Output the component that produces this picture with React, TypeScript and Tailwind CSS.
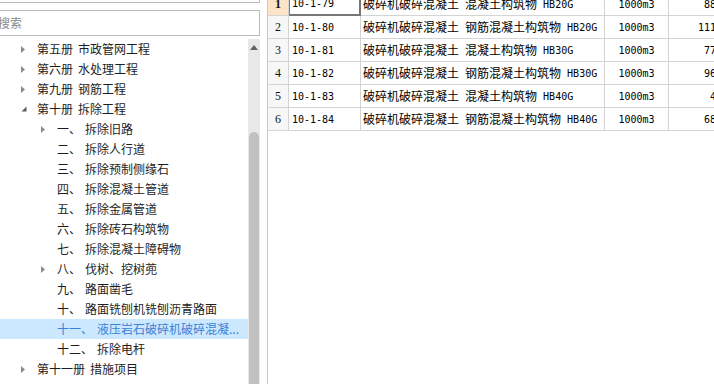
import React from "react";

type TreeNode = {
  level: 0 | 1;
  arrow?: "right" | "down";
  head: string;
  label: string;
  selected?: boolean;
};

const tree: TreeNode[] = [
  { level: 0, arrow: "right", head: "第五册", label: "市政管网工程" },
  { level: 0, arrow: "right", head: "第六册", label: "水处理工程" },
  { level: 0, arrow: "right", head: "第九册", label: "钢筋工程" },
  { level: 0, arrow: "down", head: "第十册", label: "拆除工程" },
  { level: 1, arrow: "right", head: "一、", label: "拆除旧路" },
  { level: 1, head: "二、", label: "拆除人行道" },
  { level: 1, head: "三、", label: "拆除预制侧缘石" },
  { level: 1, head: "四、", label: "拆除混凝土管道" },
  { level: 1, head: "五、", label: "拆除金属管道" },
  { level: 1, head: "六、", label: "拆除砖石构筑物" },
  { level: 1, head: "七、", label: "拆除混凝土障碍物" },
  { level: 1, arrow: "right", head: "八、", label: "伐树、挖树蔸" },
  { level: 1, head: "九、", label: "路面凿毛" },
  { level: 1, head: "十、", label: "路面铣刨机铣刨沥青路面" },
  { level: 1, head: "十一、", label: "液压岩石破碎机破碎混凝...", selected: true },
  { level: 1, head: "十二、", label: "拆除电杆" },
  { level: 0, arrow: "right", head: "第十一册", label: "措施项目" },
];

const rows = [
  { n: "1", code: "10-1-79", a: "混凝土构筑物", hb: "HB20G", v: "88.56" },
  { n: "2", code: "10-1-80", a: "钢筋混凝土构筑物", hb: "HB20G", v: "111.20" },
  { n: "3", code: "10-1-81", a: "混凝土构筑物", hb: "HB30G", v: "77.43" },
  { n: "4", code: "10-1-82", a: "钢筋混凝土构筑物", hb: "HB30G", v: "96.18" },
  { n: "5", code: "10-1-83", a: "混凝土构筑物", hb: "HB40G", v: "4.85" },
  { n: "6", code: "10-1-84", a: "钢筋混凝土构筑物", hb: "HB40G", v: "68.09" },
];

function Arrow({ kind }: { kind?: "right" | "down" }) {
  if (kind === "right")
    return (
      <svg width="5" height="7" viewBox="0 0 5 7">
        <polygon points="0,0 4,3.5 0,7" fill="#8c8c8c" />
      </svg>
    );
  if (kind === "down")
    return (
      <svg width="6" height="6" viewBox="0 0 6 6">
        <polygon points="5.5,0.5 5.5,5.5 0.5,5.5" fill="#5a5a5a" />
      </svg>
    );
  return null;
}

export default function App() {
  return (
    <div className="w-[714px] h-[384px] overflow-hidden bg-white flex font-['Noto_Sans_CJK_SC',sans-serif]">
      {/* Left panel */}
      <div className="w-[260px] shrink-0 flex flex-col min-h-0">
        <div className="-ml-[6px] w-[266px] h-[3px] shrink-0 border-b border-r border-[#bcbcbc]" />
        <div className="-ml-[6px] mt-[7px] w-[266px] h-[26px] shrink-0 border border-[#bcbcbc] flex items-center pl-[3px] text-[12px] text-[#8a8a8a]">
          搜索
        </div>
        <div className="mt-[3px] flex flex-1 min-h-0">
          <div className="w-[248px] shrink-0 flex flex-col overflow-hidden">
            {tree.map((t, i) => (
              <div
                key={i}
                className={
                  "h-[20px] shrink-0 flex items-center text-[12px] whitespace-nowrap " +
                  (t.selected ? "bg-[#cce8ff] text-[#3b80d6]" : "text-[#1e1e1e]") +
                  (t.level === 0 ? " pl-[21px]" : " pl-[41px]")
                }
              >
                <span className="w-[16px] shrink-0 flex items-center">
                  <Arrow kind={t.arrow} />
                </span>
                <span>{t.head}</span>
                <span className={t.level === 0 ? "ml-[5px]" : "ml-[4px]"}>{t.label}</span>
              </div>
            ))}
          </div>
          <div className="w-[12px] shrink-0 bg-[#e8e8e8] flex flex-col items-center">
            <div className="h-[16px] w-full flex items-center justify-center pt-[1px]">
              <svg width="8" height="5" viewBox="0 0 8 5">
                <polygon points="0,5 4,0 8,5" fill="#606060" />
              </svg>
            </div>
            <div className="mt-[77px] w-[10px] flex-1 bg-[#c1c1c1] rounded-t-[5px]" />
          </div>
        </div>
      </div>

      {/* splitter gap */}
      <div className="w-[7px] shrink-0" />

      {/* Right panel: grid */}
      <div className="flex-1 min-w-0 border-l border-[#c8c8c8] overflow-hidden">
        <div className="-mt-[7px] w-[480px] flex flex-col">
          {rows.map((r, i) => {
            const first = i === 0;
            return (
              <div key={r.n} className="flex h-[23px]">
                <div
                  className={
                    "w-[21px] shrink-0 border-r border-b border-[#d4d4d4] flex items-center justify-center text-[12px] text-[#111] font-['Liberation_Serif',serif] " +
                    (first ? "bg-[#fde4c6] font-bold" : "bg-[#f7f7f7]")
                  }
                >
                  {r.n}
                </div>
                <div
                  className={
                    "w-[72px] shrink-0 flex items-center pl-[3px] text-[10px] text-black font-['DejaVu_Sans_Mono',monospace] " +
                    (first
                      ? "border-r-2 border-b-2 border-[#777777] shadow-[inset_1px_0_0_#3a8ee6]"
                      : "border-r border-b border-[#d4d4d4]")
                  }
                >
                  {r.code}
                </div>
                <div className="w-[244px] shrink-0 border-r border-b border-[#d4d4d4] flex items-center pl-[2px] whitespace-nowrap text-black">
                  <span className="text-[12px]">破碎机破碎混凝土</span>
                  <span className="text-[10px] font-['DejaVu_Sans_Mono',monospace] whitespace-pre"> </span>
                  <span className="text-[12px]">{r.a}</span>
                  <span className="text-[10px] font-['DejaVu_Sans_Mono',monospace] whitespace-pre"> {r.hb}</span>
                </div>
                <div className="w-[64px] shrink-0 border-r border-b border-[#d4d4d4] flex items-center justify-center text-[10px] text-black font-['DejaVu_Sans_Mono',monospace]">
                  1000m3
                </div>
                <div className="w-[68px] shrink-0 border-r border-b border-[#d4d4d4] flex items-center justify-end pr-[2px] text-[10px] text-black font-['DejaVu_Sans_Mono',monospace]">
                  {r.v}
                </div>
              </div>
            );
          })}
        </div>
      </div>
    </div>
  );
}
